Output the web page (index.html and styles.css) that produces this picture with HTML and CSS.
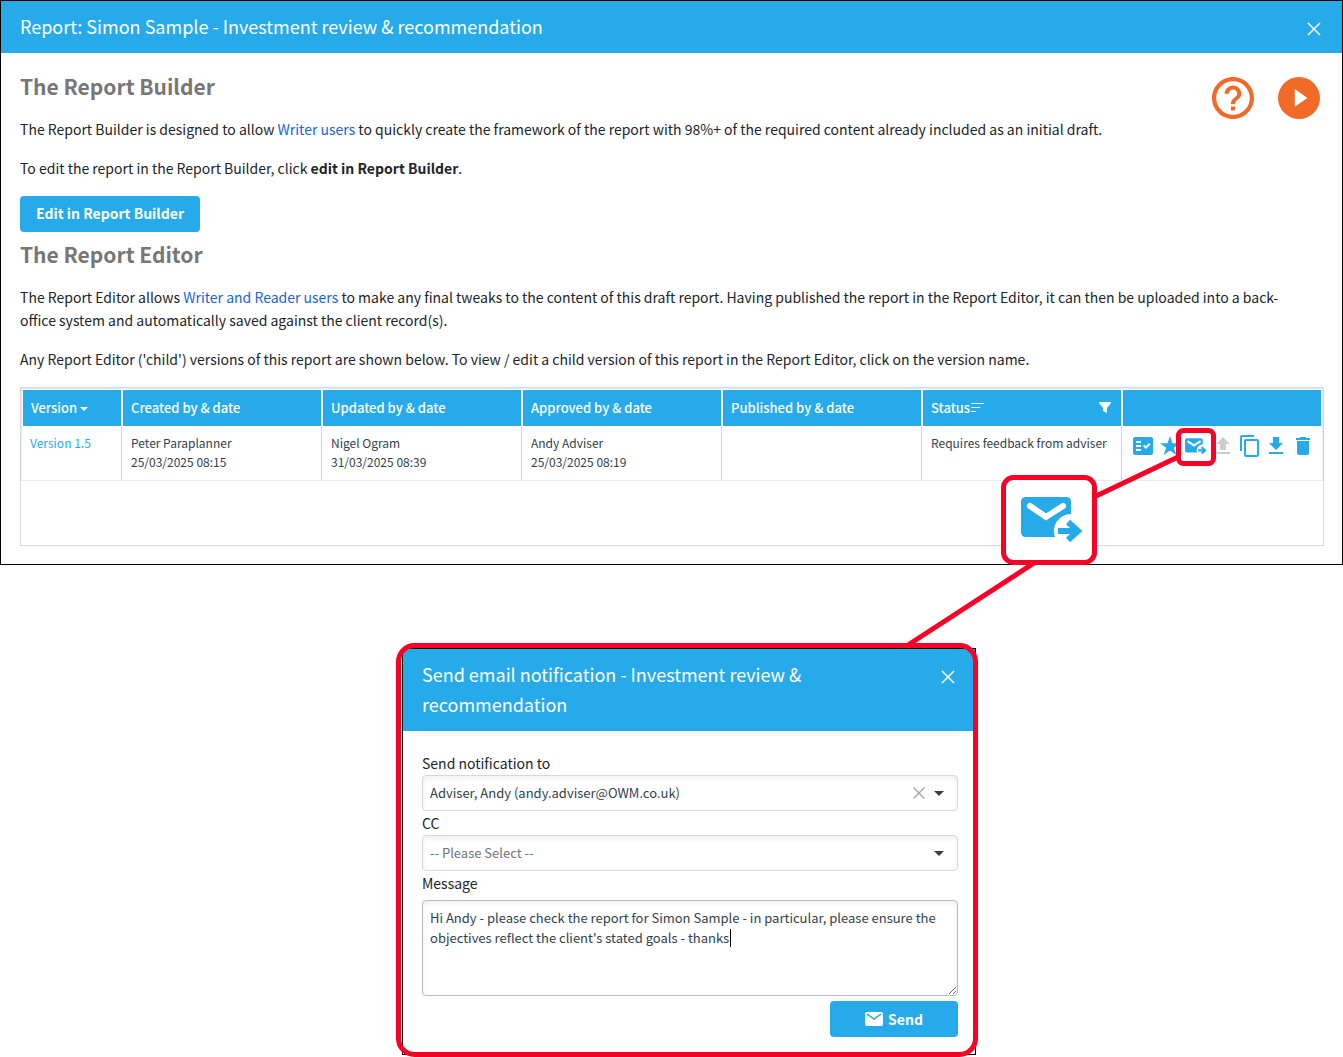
FILE: index.html
```html
<!DOCTYPE html>
<html lang="en">
<head>
    <meta charset="UTF-8">
    <title>Report: Simon Sample</title>
    <link rel="stylesheet" href="styles.css">
</head>
<body>

    <!-- shared icon -->
    <svg class="sprite" aria-hidden="true">
        <symbol id="mail-forward" viewBox="0 0 62 48">
            <path fill="#27aaea" d="M5 1H45Q50 1 50 6V18A17 17 0 0 0 34 41H5Q0 41 0 36V6Q0 1 5 1Z"/>
            <path fill="none" stroke="#fff" stroke-width="6" stroke-linecap="round" d="M9 10L25 21L42 10"/>
            <path fill="none" stroke="#27aaea" stroke-width="6" d="M37 35H57M47 26L57 35L47 44"/>
        </symbol>
    </svg>

    <section class="report">
        <div class="header">
            <h1 class="title">Report: Simon Sample - Investment review &amp; recommendation</h1>
            <button class="close-btn" type="button" aria-label="Close">
                <svg viewBox="0 0 28 28"><path d="M2 2L26 26M26 2L2 26"/></svg>
            </button>
        </div>

        <div class="report-body">
            <div class="help-links">
                <a href="#help" aria-label="Help">
                    <svg viewBox="2 2 20 20"><path d="M11 18h2v-2h-2v2zm1-16C6.480 2 2 6.480 2 12s4.480 10 10 10 10-4.480 10-10S17.520 2 12 2zm0 18c-4.410 0-8-3.590-8-8s3.590-8 8-8 8 3.590 8 8-3.590 8-8 8zm0-14c-2.210 0-4 1.790-4 4h2c0-1.100.9-2 2-2s2 .9 2 2c0 2-3 1.750-3 5h2c0-2.250 3-2.500 3-5 0-2.210-1.790-4-4-4z"/></svg>
                </a>
                <a href="#video" aria-label="Play video">
                    <svg viewBox="2 2 20 20"><path d="M12 2a10 10 0 1 0 0 20 10 10 0 0 0 0-20zm-2 14.200V7.700l6 4.300z"/></svg>
                </a>
            </div>

            <h2 class="section-title">The Report Builder</h2>
            <p>The Report Builder is designed to allow <a href="#writers">Writer users</a> to quickly create the framework of the report with 98%+ of the required content already included as an initial draft.</p>
            <p>To edit the report in the Report Builder, click <strong>edit in Report Builder</strong>.</p>
            <button class="btn edit-btn" type="button">Edit in Report Builder</button>

            <h2 class="section-title">The Report Editor</h2>
            <p>The Report Editor allows <a href="#readers">Writer and Reader users</a> to make any final tweaks to the content of this draft report. Having published the report in the Report Editor, it can then be uploaded into a back-office system and automatically saved against the client record(s).</p>
            <p>Any Report Editor ('child') versions of this report are shown below. To view / edit a child version of this report in the Report Editor, click on the version name.</p>

            <div class="grid">
                <table class="versions">
                    <colgroup>
                        <col class="col-version">
                        <col class="col-data" span="5">
                        <col>
                    </colgroup>
                    <thead>
                        <tr>
                            <th>Version <svg class="sort-arrow" viewBox="0 0 8 4"><path d="M0 0H8L4 4Z"/></svg></th>
                            <th>Created by &amp; date</th>
                            <th>Updated by &amp; date</th>
                            <th>Approved by &amp; date</th>
                            <th>Published by &amp; date</th>
                            <th>
                                <div class="status-head">
                                    <span>Status</span>
                                    <svg class="sort-lines" viewBox="0 0 14 10"><path d="M1 1.500H14M1 5.500H10M1 9.500H6"/></svg>
                                    <svg class="filter" viewBox="0 0 12 11"><path d="M0 0H12V1L8 6V11L4 9V6L0 1Z"/></svg>
                                </div>
                            </th>
                            <th></th>
                        </tr>
                    </thead>
                    <tbody>
                        <tr>
                            <td><a href="#version">Version 1.5</a></td>
                            <td>Peter Paraplanner<br>25/03/2025 08:15</td>
                            <td>Nigel Ogram<br>31/03/2025 08:39</td>
                            <td>Andy Adviser<br>25/03/2025 08:19</td>
                            <td></td>
                            <td>Requires feedback from adviser</td>
                            <td>
                                <div class="actions">
                                    <button type="button" aria-label="Checklist"><svg viewBox="0 0 24 24"><path fill-rule="evenodd" d="M20 3H4c-1.100 0-2 .9-2 2v14c0 1.100.9 2 2 2h16c1.100 0 2-.9 2-2V5c0-1.100-.9-2-2-2zM10 17H5v-2h5v2zm0-4H5v-2h5v2zm0-4H5V7h5v2zm4.820 6L12 12.160l1.410-1.410 1.410 1.420L17.990 9l1.420 1.420L14.820 15z"/></svg></button>
                                    <button type="button" aria-label="Favourite"><svg viewBox="0 0 24 24"><path d="M12 2L14.400 9.200H22L15.900 13.700L18.300 21L12 16.500L5.700 21L8.100 13.700L2 9.200H9.600Z"/></svg></button>
                                    <button type="button" aria-label="Send email notification"><svg class="mail"><use href="#mail-forward"/></svg></button>
                                    <button type="button" aria-label="Upload" disabled><svg viewBox="0 0 24 24"><path d="M5 20h14v-2H5zM5 10h4v6h6v-6h4l-7-7z"/></svg></button>
                                    <button type="button" aria-label="Copy"><svg viewBox="0 0 24 24"><path fill-rule="evenodd" d="M16 1H4c-1.100 0-2 .9-2 2v14h2V3h12V1zm3 4H8c-1.100 0-2 .9-2 2v14c0 1.100.9 2 2 2h11c1.100 0 2-.9 2-2V7c0-1.100-.9-2-2-2zm0 16H8V7h11v14z"/></svg></button>
                                    <button type="button" aria-label="Download"><svg viewBox="0 0 24 24"><path d="M19 9h-4V3H9v6H5l7 7 7-7zM5 18v2h14v-2H5z"/></svg></button>
                                    <button type="button" aria-label="Delete"><svg viewBox="0 0 24 24"><path d="M6 19c0 1.100.9 2 2 2h8c1.100 0 2-.9 2-2V7H6v12zM19 4h-3.500l-1-1h-5l-1 1H5v2h14V4z"/></svg></button>
                                </div>
                            </td>
                        </tr>
                    </tbody>
                </table>
            </div>
        </div>
    </section>

    <section class="email">
        <div class="header">
            <h2 class="title">Send email notification - Investment review &amp; recommendation</h2>
            <button class="close-btn" type="button" aria-label="Close">
                <svg viewBox="0 0 28 28"><path d="M2 2L26 26M26 2L2 26"/></svg>
            </button>
        </div>
        <form class="email-form">
            <label for="send-to">Send notification to</label>
            <div class="select-box">
                <select id="send-to">
                    <option>Adviser, Andy (andy.adviser@OWM.co.uk)</option>
                </select>
                <button class="clear-btn" type="button" aria-label="Clear">
                    <svg viewBox="0 0 24 24"><path d="M1 1L23 23M23 1L1 23"/></svg>
                </button>
                <svg class="arrow" viewBox="0 0 10 5"><path d="M0 0H10L5 5Z"/></svg>
            </div>
            <label for="cc">CC</label>
            <div class="select-box">
                <select id="cc" class="empty">
                    <option>-- Please Select --</option>
                </select>
                <svg class="arrow" viewBox="0 0 10 5"><path d="M0 0H10L5 5Z"/></svg>
            </div>
            <label for="message">Message</label>
            <div class="message-box">
                <textarea id="message">Hi Andy - please check the report for Simon Sample - in particular, please ensure the objectives reflect the client's stated goals - thanks</textarea>
                <span class="caret"></span>
            </div>
            <button class="btn send-btn" type="submit">
                <svg viewBox="0 0 18 14"><path fill="#fff" d="M2 0H16Q18 0 18 2V12Q18 14 16 14H2Q0 14 0 12V2Q0 0 2 0Z"/><path fill="none" stroke="#27aaea" stroke-width="1.500" d="M2 2L9 7L16 2"/></svg>
                Send
            </button>
        </form>
    </section>

    <!-- callout marks over the page -->
    <svg class="marks" viewBox="0 0 1343 1057" aria-hidden="true">
        <g fill="none" stroke="#fb0026" stroke-width="5">
            <path d="M1178 457L1094 497M1034 563L908 645"/>
            <rect x="1178.500" y="430.500" width="35" height="33" rx="5"/>
            <rect x="1003.500" y="477.500" width="91" height="85" rx="10" fill="#fff"/>
            <rect x="398.500" y="645.500" width="577" height="409" rx="16"/>
        </g>
        <use href="#mail-forward" x="1021" y="496" width="62" height="48"/>
    </svg>
</body>
</html>
```
FILE: styles.css
```css
:root {
    --blue: #27aaea;
    --orange: #f26a28;
    --link: #1765d8;
    --text: #212529;
    --field-text: #32424a;
    --line: #d3d9dc;
}

* {
    box-sizing: border-box;
}

body {
    margin: 0;
    position: relative;
    background-color: #fff;
    color: var(--text);
    font-family: "Noto Sans CJK SC", "Noto Sans", sans-serif;
    font-size: 14px;
    line-height: 23px;
}

button, select, textarea {
    font-family: inherit;
}

button {
    border: 0;
    padding: 0;
    background: none;
    cursor: pointer;
}

svg {
    display: block;
}

.sprite {
    position: absolute;
    width: 0;
    height: 0;
}

/* title bars */
.header {
    display: flex;
    justify-content: space-between;
    align-items: flex-start;
    padding: 10px 21px 12px 19px;
    background-color: var(--blue);
    color: #fff;
}

.title {
    margin: 0;
    font-size: 18px;
    font-weight: 400;
    line-height: 30px;
}

.close-btn {
    padding: 11px 0 0;
}

.close-btn svg {
    width: 14px;
    height: 14px;
    fill: none;
    stroke: #fff;
    stroke-width: 3;
}

/* report */
.report {
    border: 1px solid #000;
}

.report-body {
    padding: 20px 18px 18px 19px;
}

.help-links {
    float: right;
    display: flex;
    gap: 24px;
    padding: 4px 4px 0 0;
}

.help-links svg {
    width: 42px;
    height: 42px;
    fill: var(--orange);
}

.section-title {
    margin: 0 0 18px;
    color: #777;
    font-size: 21px;
    font-weight: 700;
    line-height: 27px;
}

p {
    margin: 0 0 16px;
    padding-right: 12px;
}

p a {
    color: var(--link);
    text-decoration: none;
}

.btn {
    height: 36px;
    border-radius: 4px;
    background-color: var(--blue);
    color: #fff;
    font-size: 14px;
    font-weight: 700;
}

.edit-btn {
    display: block;
    margin-bottom: 9px;
    padding: 0 16px 2px;
}

/* versions table */
.grid {
    min-height: 159px;
    border: 1px solid var(--line);
}

.versions {
    width: 100%;
    table-layout: fixed;
    border-collapse: separate;
    border-spacing: 0;
    border: 1px solid #e3ecf3;
    font-size: 12px;
    line-height: 19px;
}

.col-version {
    width: 100px;
}

.col-data {
    width: 200px;
}

.versions th {
    height: 37px;
    padding: 0 10px 2px 8px;
    border: 1px solid #fff;
    border-bottom: 0;
    border-right-color: #e3ecf3;
    background-color: var(--blue);
    color: #fff;
    font-size: 13px;
    font-weight: 500;
    text-align: left;
}

.versions td {
    height: 54px;
    padding: 7px 6px 8px 9px;
    border-right: 1px solid var(--line);
    color: var(--field-text);
    vertical-align: top;
}

.versions td:first-child {
    padding-left: 8px;
}

.versions td:last-child {
    border-right: 0;
}

.versions th:last-child {
    border-right-color: #fff;
}

.versions td a {
    color: var(--blue);
    text-decoration: none;
}

.sort-arrow {
    display: inline-block;
    width: 8px;
    height: 4px;
    vertical-align: middle;
    fill: #fff;
}

.status-head {
    display: flex;
    align-items: center;
}

.sort-lines {
    width: 14px;
    height: 10px;
    stroke: #fff;
    stroke-width: 1;
}

.filter {
    width: 12px;
    height: 11px;
    margin-left: auto;
    fill: #fff;
}

.actions {
    display: flex;
    justify-content: space-between;
    max-width: 184px;
    margin-top: 1px;
}

.actions button {
    display: flex;
    justify-content: center;
    align-items: center;
    width: 24px;
    height: 24px;
}

.actions svg {
    width: 24px;
    height: 24px;
    fill: var(--blue);
}

.actions .mail {
    width: 22px;
    height: 17px;
}

.actions button:disabled svg {
    fill: #ccc;
}

/* email dialog */
.email {
    width: 574px;
    margin: 83px 0 2px 402px;
    border: 1px solid #000;
}

.email .header {
    padding-right: 20px;
}

.email-form {
    display: flex;
    flex-direction: column;
    padding: 20px 17px 17px 19px;
}

.email-form label {
    line-height: 24px;
}

.select-box,
.message-box {
    position: relative;
}

.email-form select,
.email-form textarea {
    display: block;
    width: 100%;
    border: 1px solid var(--line);
    border-radius: 4px;
    background-color: #fff;
    box-shadow: inset 0 3px 5px rgba(0, 0, 0, 0.06);
    color: var(--field-text);
    font-size: 13px;
    outline: 0;
}

.email-form select {
    height: 36px;
    padding: 0 48px 2px 7px;
    appearance: none;
}

.email-form select.empty {
    color: #6c757d;
}

.arrow {
    position: absolute;
    top: 16px;
    right: 14px;
    width: 10px;
    height: 5px;
    fill: var(--field-text);
    pointer-events: none;
}

.clear-btn {
    position: absolute;
    top: 12px;
    right: 33px;
}

.clear-btn svg {
    width: 12px;
    height: 12px;
    fill: none;
    stroke: #a5abae;
    stroke-width: 3;
}

.message-box {
    margin: 5px 0;
}

.email-form textarea {
    height: 96px;
    padding: 7px;
    border-color: #b5bdc0;
    line-height: 20px;
    resize: vertical;
}

.caret {
    position: absolute;
    top: 29px;
    left: 308px;
    width: 1px;
    height: 18px;
    background-color: #000;
}

.send-btn {
    display: flex;
    justify-content: center;
    align-items: center;
    gap: 5px;
    align-self: flex-end;
    width: 128px;
}

.send-btn svg {
    width: 18px;
    height: 14px;
}

.marks {
    position: absolute;
    top: 0;
    left: 0;
    width: 1343px;
    height: 1057px;
    pointer-events: none;
}
```
